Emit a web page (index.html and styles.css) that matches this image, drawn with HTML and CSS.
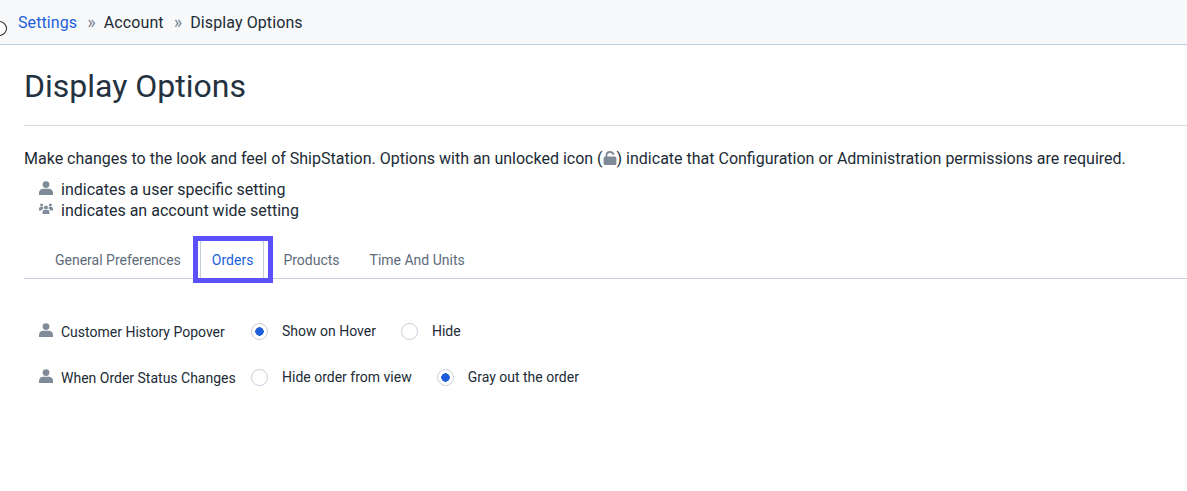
FILE: index.html
```html
<!DOCTYPE html>
<html lang="en">
<head>
<meta charset="utf-8">
<title>Display Options</title>
<link rel="stylesheet" href="styles.css">
</head>
<body>
<svg width="0" height="0" class="defs">
  <symbol id="user" viewBox="0 0 14 14"><circle cx="7" cy="3.6" r="3.4"/><path d="M0 14v-2.2C0 9 2.2 7.8 4.2 7.8h5.6c2 0 4.2 1.2 4.2 4V14z"/></symbol>
  <symbol id="users" viewBox="0 0 14 12"><circle cx="7" cy="4.400" r="1.900"/><circle cx="2.600" cy="2" r="1.500"/><circle cx="11.400" cy="2" r="1.500"/><path d="M3.600 11V9.200c0-1.700 1-2.400 2.200-2.400h2.400c1.200 0 2.200.7 2.200 2.400V11z"/><path d="M0 7.400V5.800C0 4.600.8 4 1.600 4h2c.3 0 .5.100.7.300-.2.500-.1 1 .1 1.500C3.300 6 2.800 6.700 2.600 7.400zM14 7.400V5.800c0-1.200-.8-1.800-1.600-1.800h-2c-.3 0-.5.100-.7.300.2.500.1 1-.1 1.500 1.100.2 1.600.9 1.800 1.600z"/></symbol>
</svg>
<header class="topbar">
  <span class="stub"></span>
  <nav class="crumbs">
    <a class="crumb-link">Settings</a>
    <span class="sep">»</span>
    <span>Account</span>
    <span class="sep">»</span>
    <span>Display Options</span>
  </nav>
</header>
<main class="page">
  <h1 class="title">Display Options</h1>
  <p class="intro">Make changes to the look and feel of ShipStation. Options with an unlocked icon (<svg class="lock" viewBox="0 0 14 14" width="14" height="14"><path class="shackle" d="M3.400 7V4.400C3.400 2.300 5 1 7 1s3.300 1 3.700 2.800"/><rect x="0.600" y="5.600" width="12.800" height="8.400" rx="1.600"/></svg>) indicate that Configuration or Administration permissions are required.</p>
  <ul class="legend">
    <li class="legend-row"><svg class="ico ico-user"><use href="#user"/></svg>indicates a user specific setting</li>
    <li class="legend-row"><svg class="ico ico-users"><use href="#users"/></svg>indicates an account wide setting</li>
  </ul>
  <div class="tabs">
    <span class="tab">General Preferences</span>
    <span class="tab tab-active">Orders</span>
    <span class="tab">Products</span>
    <span class="tab">Time And Units</span>
  </div>
  <section class="options">
    <div class="opt-row">
      <span class="opt-label"><svg class="ico ico-user"><use href="#user"/></svg>Customer History Popover</span>
      <span class="radio on"></span><span class="radio-text">Show on Hover</span>
      <span class="radio"></span><span class="radio-text">Hide</span>
    </div>
    <div class="opt-row">
      <span class="opt-label"><svg class="ico ico-user"><use href="#user"/></svg>When Order Status Changes</span>
      <span class="radio"></span><span class="radio-text">Hide order from view</span>
      <span class="radio on"></span><span class="radio-text">Gray out the order</span>
    </div>
  </section>
</main>
</body>
</html>
```

FILE: styles.css
```css
* { box-sizing: border-box; }
html, body { margin: 0; padding: 0; }
body {
  background: #fff;
  color: #212b36;
  font-family: Roboto, "Liberation Sans", sans-serif;
  overflow: hidden;
  height: 491px;
  position: relative;
}
.defs { position: absolute; }
.topbar {
  height: 45px;
  background: #f8f9fb;
  border-bottom: 1px solid #bccfdf;
  padding-left: 18px;
  display: flex;
  align-items: center;
}
.stub {
  position: absolute;
  left: -9px;
  top: 21px;
  width: 16px;
  height: 15px;
  border: 1px solid #222;
  border-radius: 50%;
  background: #fff;
}
.crumbs { display: flex; align-items: center; font-size: 16px; color: #212b36; padding-top: 1px; letter-spacing: .1px; }
.crumb-link { color: #1d5fdb; }
.sep { color: #7a8692; margin: -3px 8px 0 10px; font-size: 18px; }
.page { padding: 0 0 0 24px; }
.title {
  margin: 0;
  height: 81px;
  padding-top: 23px;
  border-bottom: 1px solid #d5dbe1;
  font-size: 32px;
  line-height: 37px;
  font-weight: 400;
  letter-spacing: 0;
  color: #243140;
}
.intro { margin: 23px 0 0; font-size: 16px; line-height: 20px; color: #212b36; }
.lock { vertical-align: -1px; fill: #7f8b99; }
.shackle { fill: none; stroke: #7f8b99; stroke-width: 1.800; }
.legend { list-style: none; margin: 10px 0 0; padding: 0 0 0 15px; }
.legend-row { display: flex; align-items: center; height: 21px; font-size: 16px; gap: 8px; color: #212b36; }
.ico { fill: #7f8b99; flex: none; }
.ico-user { width: 14px; height: 14px; margin-top: -3px; }
.ico-users { width: 14px; height: 12px; margin-top: -3px; }
.tabs {
  display: flex;
  height: 47px;
  margin-top: 11px;
  padding-left: 16px;
  border-bottom: 1px solid #c4cfd9;
  font-size: 14px;
}
.tab {
  padding: 10px 15px 0;
  display: flex;
  align-items: center;
  color: #5d6b7a;
}
.tab-active {
  color: #1d5fdb;
  position: relative;
  padding: 0 10px 0 11px;
  margin: 8px 4px -1px 4px;
  background: #fff;
  border: 1px solid #c4cfd9;
  border-bottom: 0;
  border-radius: 3px 3px 0 0;
}
.tab-active::after {
  content: "";
  position: absolute;
  top: -5px;
  left: -8px;
  right: -10px;
  bottom: -4px;
  border: 5px solid #5c50fb;
}
.options { padding: 29px 0 0 15px; }
.opt-row { display: flex; align-items: center; height: 46px; font-size: 14px; }
.opt-label { display: flex; align-items: center; gap: 8px; width: 212px; padding-top: 1px; flex: none; }
.radio {
  width: 17px;
  height: 17px;
  border: 1px solid #c4cfd9;
  border-radius: 50%;
  flex: none;
  margin-right: 14px;
  background: #fff;
}
.radio.on {
  background: radial-gradient(circle, #1d5fdb 0 4px, #fff 4.500px);
}
.radio-text { margin-right: 25px; }
```
